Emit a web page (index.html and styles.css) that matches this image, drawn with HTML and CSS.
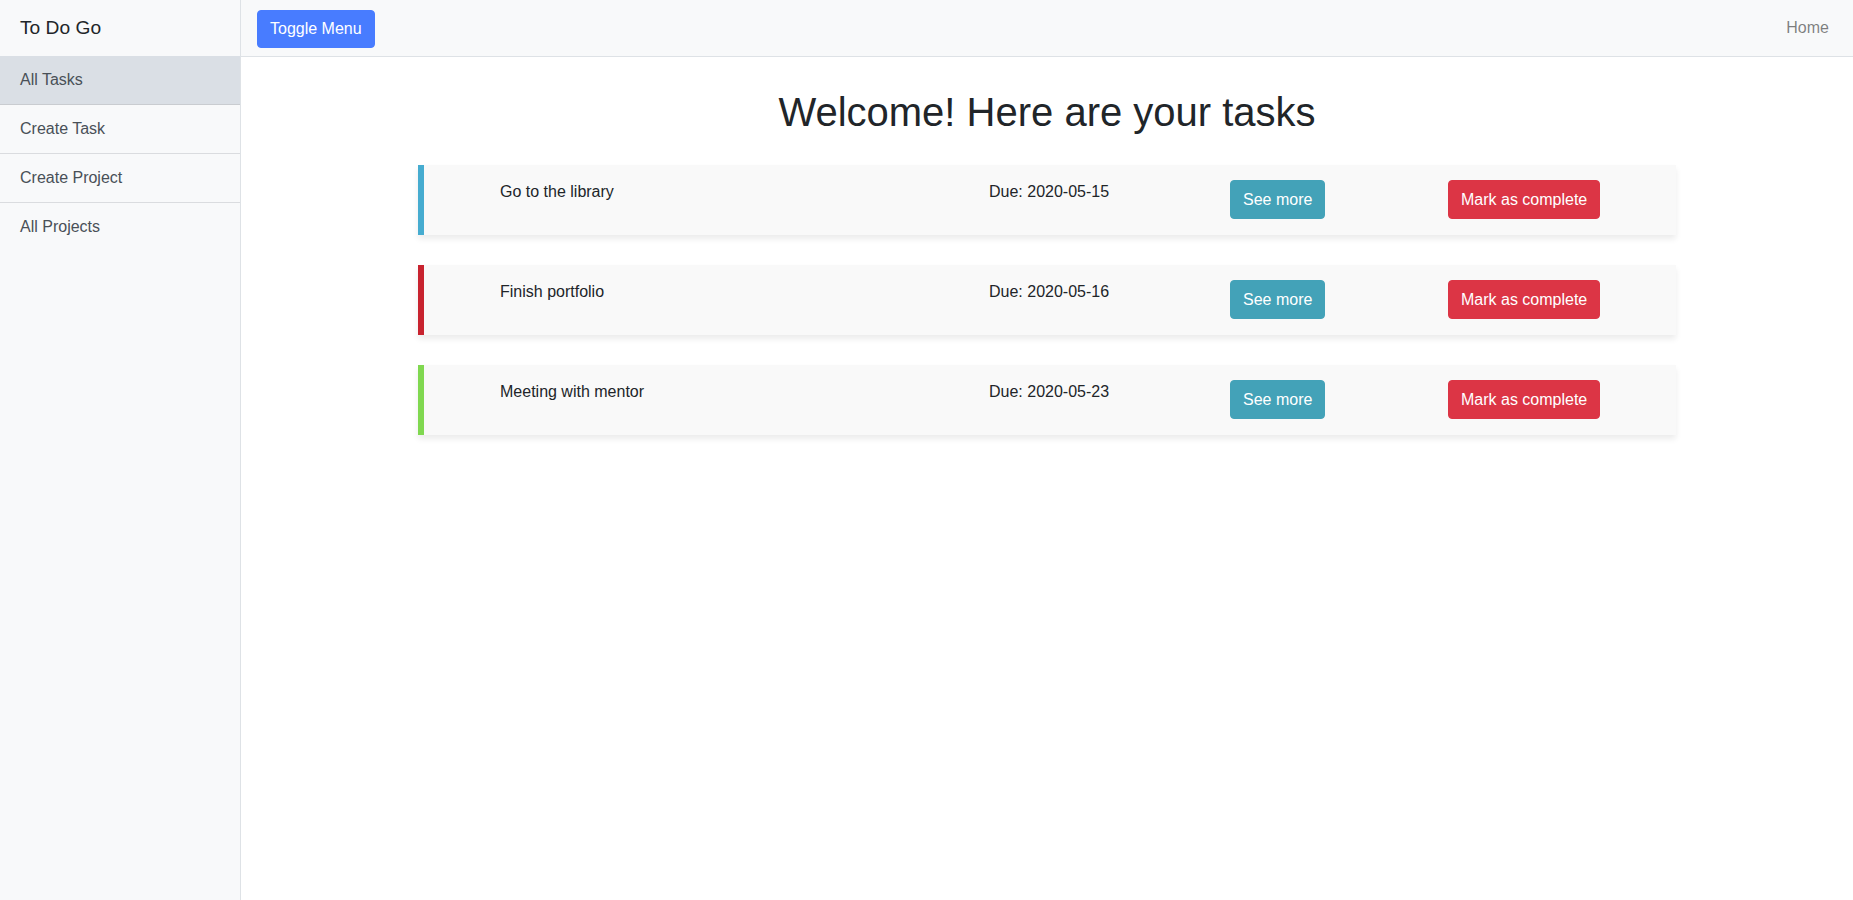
FILE: index.html
```html
<!DOCTYPE html>
<html lang="en">
<head>
<meta charset="utf-8">
<title>To Do Go</title>
<link rel="stylesheet" href="styles.css">
</head>
<body>
<div class="wrapper">
  <aside class="sidebar">
    <div class="sidebar-heading">To Do Go</div>
    <nav class="list-group">
      <a class="list-item active" href="#">All Tasks</a>
      <a class="list-item" href="#">Create Task</a>
      <a class="list-item" href="#">Create Project</a>
      <a class="list-item" href="#">All Projects</a>
    </nav>
  </aside>
  <div class="page">
    <header class="navbar">
      <button class="btn btn-primary">Toggle Menu</button>
      <a class="nav-link" href="#">Home</a>
    </header>
    <main class="content">
      <h1 class="title">Welcome! Here are your tasks</h1>
      <div class="tasks">
        <div class="task task-blue">
          <div class="task-name">Go to the library</div>
          <div class="task-due">Due: 2020-05-15</div>
          <div class="task-more"><button class="btn btn-info">See more</button></div>
          <div class="task-done"><button class="btn btn-danger">Mark as complete</button></div>
        </div>
        <div class="task task-red">
          <div class="task-name">Finish portfolio</div>
          <div class="task-due">Due: 2020-05-16</div>
          <div class="task-more"><button class="btn btn-info">See more</button></div>
          <div class="task-done"><button class="btn btn-danger">Mark as complete</button></div>
        </div>
        <div class="task task-green">
          <div class="task-name">Meeting with mentor</div>
          <div class="task-due">Due: 2020-05-23</div>
          <div class="task-more"><button class="btn btn-info">See more</button></div>
          <div class="task-done"><button class="btn btn-danger">Mark as complete</button></div>
        </div>
      </div>
    </main>
  </div>
</div>
</body>
</html>
```
FILE: styles.css
```css
* { box-sizing: border-box; }
html, body { margin: 0; padding: 0; height: 100%; }
body {
  font-family: "Liberation Sans", Arial, Helvetica, sans-serif;
  font-size: 16px;
  line-height: 1.5;
  color: #212529;
  background: #fff;
}
.wrapper { display: flex; min-height: 100vh; }
.sidebar {
  width: 241px;
  flex: 0 0 241px;
  background: #f8f9fa;
  border-right: 1px solid #dee2e6;
}
.sidebar-heading {
  height: 56px;
  padding: 14px 20px;
  font-size: 19.2px;
  line-height: 28px;
  color: #212529;
}
.list-group { display: flex; flex-direction: column; }
.list-item {
  display: block;
  height: 49px;
  padding: 12px 20px;
  border-top: 1px solid #dadcdf;
  color: #495057;
  text-decoration: none;
  line-height: 24px;
  background: #f8f9fa;
}
.list-item:first-child { border-top: none; height: 48px; }
.list-item.active { background: #dadfe5; }
.list-item.active + .list-item { border-top-color: #c9ccd0; }
.page { flex: 1; display: flex; flex-direction: column; min-width: 0; }
.navbar {
  height: 57px;
  display: flex;
  align-items: center;
  justify-content: space-between;
  padding: 0 16px;
  background: #f8f9fa;
  border-bottom: 1px solid #dee2e6;
}
.nav-link {
  color: rgba(0,0,0,.5);
  text-decoration: none;
  padding: 8px;
  line-height: 24px;
}
.btn {
  font-family: inherit;
  font-size: 16px;
  line-height: 24px;
  padding: 6px 12px;
  border: 1px solid transparent;
  border-radius: 4px;
  color: #fff;
  cursor: pointer;
  height: 38px;
}
.btn-primary { background: #487cff; border-color: #487cff; margin-top: 1px; }
.btn-info { background: #43a2b8; border-color: #43a2b8; margin-top: 1px; height: 39px; }
.btn-danger { background: #dc3545; border-color: #dc3545; margin-top: 1px; height: 39px; }
.content { padding: 31px 0 40px; }
.title {
  margin: 0 0 29px;
  text-align: center;
  font-size: 40px;
  line-height: 48px;
  font-weight: 400;
  color: #212529;
}
.tasks {
  width: 1258px;
  margin: 0 auto;
  display: flex;
  flex-direction: column;
  gap: 30px;
}
.task {
  height: 70px;
  display: grid;
  grid-template-columns: 489px 241px 218px 1fr;
  align-items: start;
  padding: 14px 0 0 76px;
  background: #f9f9f9;
  border-left: 6px solid #46acd0;
  box-shadow: 0 4px 6px rgba(0,0,0,.08);
}
.task-red { border-left-color: #c8232f; }
.task-green { border-left-color: #80d850; }
.task-name, .task-due { line-height: 24px; padding-top: 1px; }
```
